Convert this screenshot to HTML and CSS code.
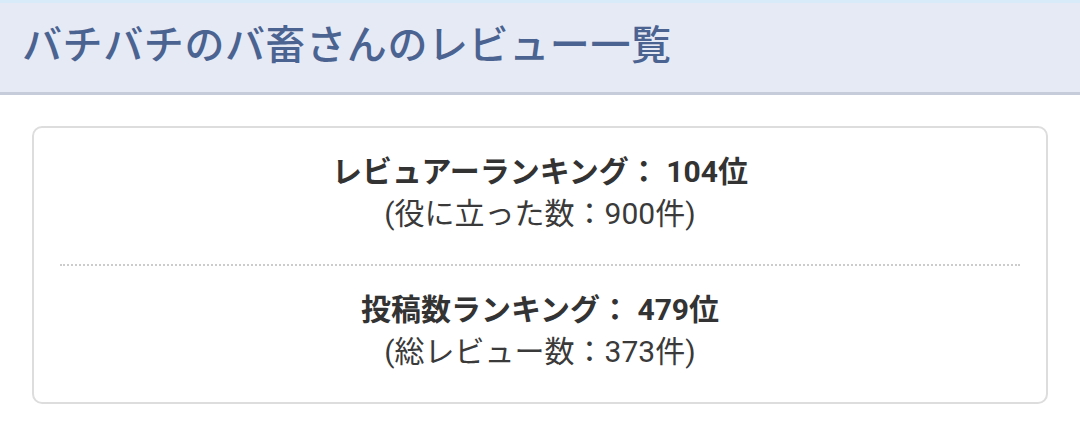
FILE: index.html
```html
<!DOCTYPE html>
<html lang="ja">
<head>
    <meta charset="UTF-8">
    <meta name="viewport" content="width=device-width, initial-scale=1.0">
    <title>バチバチのバ畜さんのレビュー一覧</title>
    <link rel="stylesheet" href="styles.css">
</head>
<body>
    <header class="page-header">
        <h1>バチバチのバ畜さんのレビュー一覧</h1>
    </header>

    <div class="ranking-box">
        <div class="ranking">
            <p class="ranking-title">レビュアーランキング： 104位</p>
            <p class="ranking-note">(役に立った数：900件)</p>
        </div>
        <div class="ranking">
            <p class="ranking-title">投稿数ランキング： 479位</p>
            <p class="ranking-note">(総レビュー数：373件)</p>
        </div>
    </div>
</body>
</html>
```

FILE: styles.css
```css
* {
    margin: 0;
    padding: 0;
    box-sizing: border-box;
}

body {
    background-color: white;
    font-family: Roboto, "Noto Sans CJK JP", sans-serif;
    color: #333;
}

.page-header {
    background-color: #e6eaf5;
    border-top: 3px solid #d8ebf8;
    border-bottom: 3px solid #c6ccda;
    height: 95px;
    display: flex;
    align-items: center;
    padding: 0 0 12px 22px;
}

.page-header h1 {
    font-family: "Noto Sans CJK JP", sans-serif;
    font-size: 40px;
    font-weight: 500;
    color: #4b6391;
    letter-spacing: 0.6px;
}

.ranking-box {
    margin: 31px 32px 0;
    border: 2px solid #dddddd;
    border-radius: 10px;
    padding: 0 26px;
}

.ranking {
    padding: 23px 0 29px;
    text-align: center;
    line-height: 42px;
    font-size: 30px;
}

.ranking + .ranking {
    border-top: 2px dotted #cccccc;
}

.ranking-title {
    font-weight: bold;
}

.ranking-note {
    color: #3a3a3a;
}
```
